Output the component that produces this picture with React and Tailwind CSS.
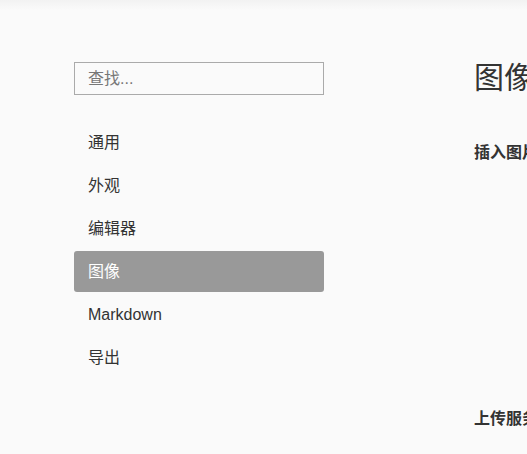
import React from "react";

const items = ["通用", "外观", "编辑器", "图像", "Markdown", "导出"];

export default function App() {
  return (
    <div
      className="w-[527px] h-[454px] overflow-hidden bg-[#fafafa] text-[#333]"
      style={{ fontFamily: '"Liberation Sans", "Noto Sans CJK SC", sans-serif' }}
    >
      <div className="h-[10px] bg-linear-to-b from-[#f2f2f2] to-[#fafafa]" />
      <div className="flex pl-[74px] pt-[52px]">
        <div className="w-[250px] shrink-0">
          <div className="h-[33px] border border-[#aaa] bg-[#fafafa] flex items-center pl-[13px] text-[16px] text-[#777]">
            查找...
          </div>
          <div className="mt-[27px] flex flex-col gap-[2px]">
            {items.map((t) => (
              <div
                key={t}
                className={
                  "h-[41px] flex items-center pl-[14px] text-[16px] rounded-[3px] " +
                  (t === "图像" ? "bg-[#999] text-white" : "text-[#333]")
                }
              >
                {t}
              </div>
            ))}
          </div>
        </div>
        <div className="ml-[150px] shrink-0 w-[400px]">
          <div className="text-[30px] leading-[34px] text-[#333] -mt-[1px] whitespace-nowrap">图像</div>
          <div className="mt-[46px] text-[16px] font-bold text-[#333] whitespace-nowrap">插入图片时...</div>
          <div className="mt-[242px] text-[16px] font-bold text-[#333] whitespace-nowrap">上传服务设定</div>
        </div>
      </div>
    </div>
  );
}
